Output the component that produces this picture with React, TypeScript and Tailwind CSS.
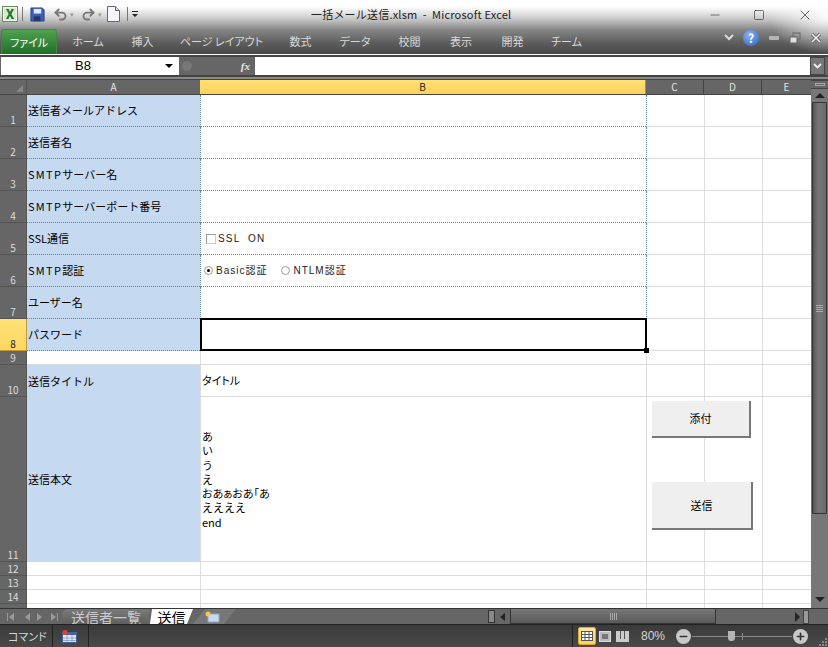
import { Minus, Plus, X, Square, Undo2, Redo2 } from "lucide-react"

const jp = "font-['Noto_Sans_CJK_JP','Noto_Sans',sans-serif]"
const mixed = "font-['Liberation_Sans','Noto_Sans_CJK_JP',sans-serif]"
const palt = "[font-feature-settings:'palt']"

const menuTabs = [
  { label: "ホーム", w: "w-[30px]" },
  { label: "挿入", w: "w-[23px]" },
  { label: "ページ レイアウト", w: "w-[79px]" },
  { label: "数式", w: "w-[23px]" },
  { label: "データ", w: "w-[30px]" },
  { label: "校閲", w: "w-[23px]" },
  { label: "表示", w: "w-[24px]" },
  { label: "開発", w: "w-[23px]" },
  { label: "チーム", w: "w-[29px]" },
]

type Row = { no?: number; h: string; a?: React.ReactNode; blue?: boolean; dotted?: boolean; sel?: boolean; b?: React.ReactNode }

const Wide = ({ children }: { children: string }) => <span className="tracking-[1.3px]">{children}</span>

const rows: Row[] = [
  { no: 1, h: "h-[32px]", a: "送信者メールアドレス", blue: true, dotted: true },
  { no: 2, h: "h-[32px]", a: "送信者名", blue: true, dotted: true },
  { no: 3, h: "h-[32px]", a: <><Wide>SMTP</Wide>サーバー名</>, blue: true, dotted: true },
  { no: 4, h: "h-[32px]", a: <><Wide>SMTP</Wide>サーバーポート番号</>, blue: true, dotted: true },
  {
    no: 5, h: "h-[32px]", a: "SSL通信", blue: true, dotted: true,
    b: (
      <div className={`flex items-center gap-[2px] whitespace-pre pl-[5px] text-[10px] tracking-[1.2px] text-[#222] ${mixed}`}>
        <span className="h-[10px] w-[10px] border border-b-[#ccc] border-l-[#999] border-r-[#ccc] border-t-[#999] bg-white" />
        {"SSL  ON"}
      </div>
    ),
  },
  {
    no: 6, h: "h-[32px]", a: <><Wide>SMTP</Wide>認証</>, blue: true, dotted: true,
    b: (
      <div className={`flex items-center pl-[3px] text-[10px] tracking-[1px] text-[#222] ${mixed}`}>
        <span className="mr-[3px] flex h-[9px] w-[9px] items-center justify-center rounded-full border border-[#999]">
          <span className="h-[3px] w-[3px] rounded-full bg-black" />
        </span>
        Basic認証
        <span className="ml-[14px] mr-[3px] h-[9px] w-[9px] rounded-full border border-[#999]" />
        NTLM認証
      </div>
    ),
  },
  { no: 7, h: "h-[32px]", a: "ユーザー名", blue: true, dotted: true },
  { no: 8, h: "h-[32px]", a: "パスワード", blue: true, dotted: true, sel: true },
  { no: 9, h: "h-[14px]" },
  { no: 10, h: "h-[32px]", a: "送信タイトル", blue: true, b: <span className={`pl-[1px] ${palt}`}>タイトル</span> },
  {
    no: 11, h: "h-[165px]", a: "送信本文", blue: true,
    b: (
      <div className="pl-[1px] leading-[14.3px]">
        <div>あ</div><div>い</div><div>う</div><div>え</div><div className={palt}>おあぁおあ「あ</div><div>ええええ</div><div>end</div>
      </div>
    ),
  },
  { no: 12, h: "h-[14px]" },
  { no: 13, h: "h-[14px]" },
  { no: 14, h: "h-[14px]" },
  { h: "h-[14px]" },
]

function SheetRow({ r }: { r: Row }) {
  const dot = "border-dotted border-[#5f8497]"
  return (
    <div className={`flex ${r.h} shrink-0`}>
      <div className={`flex w-[27px] shrink-0 items-end justify-center border-b border-r ${r.sel ? "border-[#c29a3e] bg-[linear-gradient(#ffe27a,#ffd75e)] text-[#222]" : "border-[#555] bg-[#666] text-[#ddd]"} text-[10px] leading-[12px]`}>
        {r.no}
      </div>
      <div className={`flex w-[173px] shrink-0 items-center whitespace-nowrap pl-[1px] ${r.blue ? "bg-[#c5d9f1]" : "bg-white"} ${r.dotted ? `border-b ${dot}` : r.blue ? "" : "border-b border-[#dcdcdc]"}`}>
        {r.a}
      </div>
      <div className={`relative flex w-[446px] shrink-0 items-center border-l ${r.dotted ? `border-b ${dot}` : "border-b border-[#dcdcdc]"} ${r.dotted ? "border-l-[#5f8497] [border-left-style:dotted]" : "border-l-[#dcdcdc]"}`}>
        {r.b}
        {r.sel && (
          <div className="absolute inset-x-[-1px] inset-y-[-1px] border-[2px] border-black">
            <span className="absolute bottom-[-4px] right-[-4px] h-[5px] w-[5px] bg-black" />
          </div>
        )}
      </div>
      <div className={`w-[58px] shrink-0 border-b border-l ${r.dotted ? "border-l-[#5f8497] [border-left-style:dotted]" : "border-l-[#dcdcdc]"} border-b-[#dcdcdc]`} />
      <div className="w-[58px] shrink-0 border-b border-l border-[#dcdcdc]" />
      <div className="w-[49px] shrink-0 border-b border-l border-[#dcdcdc]" />
    </div>
  )
}

function ExcelIcon() {
  return (
    <svg width="16" height="16" viewBox="0 0 16 16">
      <rect x="0.5" y="0.5" width="15" height="15" fill="#eef4e8" stroke="#6d8c5c" />
      <rect x="2" y="2" width="12" height="12" fill="#dbe8ce" />
      <path d="M4 3h2.600L8 6l1.500-3H12L9.400 8l2.800 5H9.600L8 9.800 6.400 13H3.900l2.800-5z" fill="#1e7a34" />
    </svg>
  )
}

export default function App() {
  return (
    <div className={`flex h-[647px] w-[828px] flex-col overflow-hidden bg-[#666] text-[11px] text-black ${jp}`}>
      {/* Title + ribbon tabs */}
      <div className="relative h-[54px] shrink-0 bg-[linear-gradient(#ffffff_0%,#ffffff_12%,#c9c9c9_35%,#868686_55%,#5c5c5c_80%,#484848_100%)]">
        <div className="absolute inset-y-0 right-0 w-[60px] bg-[radial-gradient(ellipse_at_100%_30%,rgba(255,255,255,0.9),rgba(255,255,255,0)_70%)]" />
        <div className="relative flex h-[28px] items-center pl-[2px]">
          <ExcelIcon />
          <span className="ml-[4px] mr-[7px] h-[14px] w-px bg-[#777]" />
          <svg width="15" height="15" viewBox="0 0 16 16">
            <path d="M1 1h12l2 2v12H1z" fill="#3c5fb4" stroke="#24407f" />
            <rect x="4" y="2" width="8" height="5" fill="#dfe7f7" />
            <rect x="4" y="10" width="7" height="5" fill="#26356a" />
          </svg>
          <Undo2 size={15} strokeWidth={3} className="ml-[8px] text-[#777]" />
          <span className="ml-[2px] text-[7px] text-[#999]">▾</span>
          <Redo2 size={15} strokeWidth={3} className="ml-[7px] text-[#777]" />
          <span className="ml-[2px] text-[7px] text-[#999]">▾</span>
          <svg className="ml-[5px]" width="13" height="16" viewBox="0 0 13 16">
            <path d="M0.500 0.500h8l4 4v11H0.500z" fill="#f4f6fb" stroke="#666" />
            <path d="M8.500 0.500v4h4" fill="#cfd8ea" stroke="#666" />
          </svg>
          <span className="ml-[7px] mr-[3px] h-[14px] w-px bg-[#777]" />
          <svg width="8" height="8" viewBox="0 0 8 8">
            <path d="M1 1h6v1H1zM1 4h6L4 7z" fill="#222" />
          </svg>
          <div className="absolute left-[311px] top-[6px] whitespace-pre text-[11px] tracking-[0.2px] text-[#222]">{"一括メール送信.xlsm  -  Microsoft Excel"}</div>
          <div className="absolute right-0 top-[7px] flex items-center text-[#222]">
            <Minus size={14} strokeWidth={1} className="mr-[31px]" />
            <Square size={12} strokeWidth={1.2} className="mr-[32px]" />
            <X size={16} strokeWidth={1} className="mr-[15px]" />
          </div>
        </div>
        <div className="relative flex h-[26px] items-end">
          <div className={`ml-[1px] mr-[16px] flex h-[25px] w-[56px] items-center justify-center rounded-t-[3px] border border-b-0 border-[#3f8a3f] bg-[linear-gradient(#4fa24f,#1f6f2a)] text-white ${palt}`}>ファイル</div>
          <div className="flex gap-[28px]">
            {menuTabs.map((t) => (
              <div key={t.label} className={`flex h-[25px] ${t.w} items-center justify-center whitespace-nowrap text-[#d8d8d8] ${palt}`}>{t.label}</div>
            ))}
          </div>
          <div className="absolute right-[6px] top-[2px] flex items-center">
            <svg width="10" height="8" viewBox="0 0 10 8" className="mr-[9px]">
              <path d="M1 1l4 4 4-4" fill="none" stroke="#ddd" strokeWidth="2" />
            </svg>
            <span className="mr-[10px] flex h-[16px] w-[16px] items-center justify-center rounded-full bg-[radial-gradient(circle_at_40%_30%,#8db4ee,#2d62c0)] text-[12px] font-bold leading-none text-white">?</span>
            <span className="mr-[10px] h-[4px] w-[10px] rounded-[1px] bg-[#b5b5b5]" />
            <svg width="12" height="12" viewBox="0 0 12 12" className="mr-[9px]">
              <rect x="4" y="1" width="7" height="6" fill="none" stroke="#666" />
              <rect x="1" y="5" width="7" height="6" fill="#ddd" stroke="#666" />
            </svg>
            <svg width="12" height="12" viewBox="0 0 12 12">
              <path d="M2 2l8 8M10 2l-8 8" stroke="#666" strokeWidth="3.400" />
              <path d="M2 2l8 8M10 2l-8 8" stroke="#eee" strokeWidth="1.600" />
            </svg>
          </div>
        </div>
      </div>
      <div className="h-[1px] shrink-0 bg-white" />

      {/* Formula bar */}
      <div className="flex h-[20px] shrink-0 items-stretch border-t-2 border-[#444] pl-[1px] pr-[1px]">
        <div className="relative flex w-[178px] items-center justify-center bg-white font-['Liberation_Sans',sans-serif] text-[13px]">
          <span className="pr-[14px]">B8</span>
          <span className="absolute right-[6px] top-[7px] h-0 w-0 border-x-[4px] border-t-[4px] border-x-transparent border-t-black" />
        </div>
        <div className="flex w-[76px] items-center justify-end rounded-l-[9px] bg-[#666] pr-[5px] font-['Liberation_Serif',serif] text-[11px] font-bold italic text-[#e6e6e6]">
          <span className="ml-[3px] mr-auto h-[10px] w-[10px] rounded-full bg-[#777]" />
          fx
        </div>
        <div className="w-[555px] bg-white" />
        <div className="flex w-[15px] items-center justify-center border border-[#444] bg-[#777]">
          <svg width="9" height="6" viewBox="0 0 9 6">
            <path d="M1 1l3.500 3.500L8 1" fill="none" stroke="#eee" strokeWidth="1.800" />
          </svg>
        </div>
      </div>
      <div className="flex h-[5px] shrink-0 flex-col justify-center bg-[#444]"><div className="h-[2px] bg-[#8a8a8a]" /></div>

      {/* Sheet area */}
      <div className="flex h-[528px] shrink-0">
        <div className="relative flex w-[811px] shrink-0 flex-col overflow-hidden bg-white">
          <div className="flex h-[15px] shrink-0 border-b border-[#444] bg-[#666] text-[10px] leading-[13px] text-[#e4e4e4]">
            <div className="relative w-[27px] shrink-0 border-r border-[#555]">
              <span className="absolute bottom-[2px] right-[3px] h-0 w-0 border-b-[7px] border-l-[7px] border-b-[#888] border-l-transparent" />
            </div>
            <div className="w-[173px] shrink-0 text-center">A</div>
            <div className="w-[446px] shrink-0 border-r border-[#b08a30] bg-[linear-gradient(#ffe07a,#ffd257)] text-center text-[#222]">B</div>
            <div className="w-[58px] shrink-0 border-r border-[#444] text-center">C</div>
            <div className="w-[58px] shrink-0 border-r border-[#444] text-center">D</div>
            <div className="w-[49px] shrink-0 text-center">E</div>
          </div>
          {rows.map((r, i) => <SheetRow key={i} r={r} />)}
          <button className="absolute left-[652px] top-[321px] h-[37px] w-[99px] border-b-2 border-r-2 border-[#777] bg-[#efefef] text-[11px]">添付</button>
          <button className="absolute left-[652px] top-[402px] h-[48px] w-[101px] border-b-2 border-r-2 border-[#777] bg-[#efefef] text-[11px]">送信</button>
        </div>
        {/* Vertical scrollbar */}
        <div className="flex w-[17px] shrink-0 flex-col items-center bg-[#777]">
          <div className="flex h-[9px] w-full items-center justify-center border-y border-[#444] bg-[#666]"><span className="h-[3px] w-[10px] border border-[#aaa]" /></div>
          <span className="mt-[4px] h-0 w-0 border-x-[5px] border-b-[5px] border-x-transparent border-b-[#222]" />
          <div className="mt-[4px] flex h-[412px] w-[15px] shrink-0 items-center justify-center rounded-[1px] border border-[#333] bg-[linear-gradient(90deg,#555,#777_40%,#6a6a6a)]">
            <div className="flex w-[7px] flex-col gap-[1px]">
              <span className="h-px bg-[#aaa]" /><span className="h-px bg-[#aaa]" /><span className="h-px bg-[#aaa]" /><span className="h-px bg-[#aaa]" />
            </div>
          </div>
          <span className="mb-[6px] mt-auto h-0 w-0 border-x-[5px] border-t-[5px] border-x-transparent border-t-[#222]" />
        </div>
      </div>

      {/* Sheet tabs + horizontal scrollbar */}
      <div className="flex h-[16px] shrink-0 items-center overflow-hidden border-t border-[#333] bg-[#666]">
        <svg width="62" height="10" viewBox="0 0 62 10" className="shrink-0">
          <path d="M7 1h1v8H7zM14 1v8L9 5zM30 1v8l-5-4zM37 1v8l5-4zM51 1v8l5-4zM57 1h1v8h-1z" fill="#999" />
        </svg>
        <div className="flex h-full w-[88px] shrink-0 items-center justify-center bg-[linear-gradient(#7a7a7a,#5f5f5f)] text-[14px] leading-[14px] text-[#ccc] [clip-path:polygon(4px_0,100%_0,calc(100%-2px)_100%,0_100%,0_4px)]">送信者一覧</div>
        <div className="flex h-full w-[43px] shrink-0 items-center justify-center bg-white text-[14px] leading-[14px] [clip-path:polygon(2px_0,100%_0,calc(100%-6px)_100%,0_100%)]">送信</div>
        <div className="flex h-full w-[43px] shrink-0 items-center bg-[#777] pl-[11px] [clip-path:polygon(12px_0,100%_0,calc(100%-12px)_100%,0_100%)]">
          <svg width="16" height="12" viewBox="0 0 16 12">
            <rect x="4" y="3" width="11" height="8" fill="#c7d9ef" stroke="#8fa5c4" />
            <circle cx="4" cy="3" r="2.500" fill="#f5c94a" />
          </svg>
        </div>
        <div className="ml-[252px] h-[13px] w-[7px] shrink-0 border border-[#333] bg-[#888]" />
        <span className="ml-[5px] h-0 w-0 shrink-0 border-y-[4px] border-r-[5px] border-y-transparent border-r-[#222]" />
        <div className="ml-[5px] flex h-full w-[206px] shrink-0 items-center justify-center rounded-[1px] border-x border-b border-[#333] bg-[linear-gradient(#777,#5a5a5a)]">
          <span className="flex gap-[1px]"><span className="h-[7px] w-px bg-[#aaa]" /><span className="h-[7px] w-px bg-[#aaa]" /><span className="h-[7px] w-px bg-[#aaa]" /><span className="h-[7px] w-px bg-[#aaa]" /></span>
        </div>
        <span className="ml-[79px] h-0 w-0 shrink-0 border-y-[5px] border-l-[5px] border-y-transparent border-l-[#222]" />
        <div className="ml-[3px] h-[14px] w-[6px] shrink-0 border border-[#444] bg-[#999]" />
      </div>

      {/* Status bar */}
      <div className="relative flex h-[23px] shrink-0 items-center border-t border-[#222] bg-[linear-gradient(#3a3a3a,#4a4a4a)] text-[#d6d6d6]">
        <span className={`ml-[8px] w-[44px] whitespace-nowrap text-[11px] ${palt}`}>コマンド</span>
        <span className="h-full w-px bg-[#222]" />
        <svg width="15" height="13" viewBox="0 0 15 13" className="ml-[9px]">
          <rect x="0.500" y="2.500" width="14" height="10" fill="#dfe8f6" stroke="#47639a" />
          <rect x="1" y="3" width="13" height="2" fill="#47639a" />
          <circle cx="3" cy="2.500" r="2.500" fill="#d8452f" />
          <path d="M1 8h13M1 10.500h13M5 5v7M10 5v7" stroke="#7f98c4" strokeWidth="0.800" />
        </svg>
        <span className="ml-[11px] h-full w-px bg-[#222]" />
        <span className="ml-[483px] h-full w-px bg-[#222]" />
        <div className="ml-[5px] flex h-[18px] w-[18px] items-center justify-center rounded-[2px] border border-[#d9a93a] bg-[linear-gradient(#ffe79a,#ffd15c)]">
          <svg width="12" height="10" viewBox="0 0 12 10"><rect x="0.500" y="0.500" width="11" height="9" fill="#fff" stroke="#555" /><path d="M0 3.500h12M0 6.500h12M4 0v10M8 0v10" stroke="#555" /></svg>
        </div>
        <svg width="12" height="11" viewBox="0 0 12 11" className="ml-[3px]"><rect x="0.500" y="0.500" width="11" height="10" fill="#bbb" stroke="#ddd" /><rect x="3" y="3" width="6" height="5" fill="#777" /></svg>
        <svg width="13" height="11" viewBox="0 0 13 11" className="ml-[5px]"><rect width="13" height="11" fill="#ccc" /><rect x="4" y="0" width="1" height="8" fill="#555" /><rect x="8" y="0" width="1" height="8" fill="#555" /></svg>
        <span className="ml-[12px] w-[26px] whitespace-nowrap font-['Liberation_Sans',sans-serif] text-[12px]">80%</span>
        <span className="ml-[9px] flex h-[15px] w-[15px] items-center justify-center rounded-full bg-[#c8c8c8]"><Minus size={11} strokeWidth={3.500} className="text-[#333]" /></span>
        <div className="relative mx-[1px] h-px w-[100px] bg-[#888]">
          <span className="absolute left-[36px] top-[-5px] h-[10px] w-[7px] rounded-b-[3px] bg-[#b5b5b5]" />
          <span className="absolute left-[50px] top-[-3px] h-[7px] w-px bg-[#888]" />
        </div>
        <span className="flex h-[15px] w-[15px] items-center justify-center rounded-full bg-[#c8c8c8]"><Plus size={11} strokeWidth={3.500} className="text-[#333]" /></span>
        <svg width="9" height="9" viewBox="0 0 9 9" className="absolute bottom-[1px] right-[1px]">
          <path d="M7 1h2v2H7zM4 4h2v2H4zM7 4h2v2H7zM1 7h2v2H1zM4 7h2v2H4zM7 7h2v2H7z" fill="#888" />
        </svg>
      </div>
    </div>
  )
}
